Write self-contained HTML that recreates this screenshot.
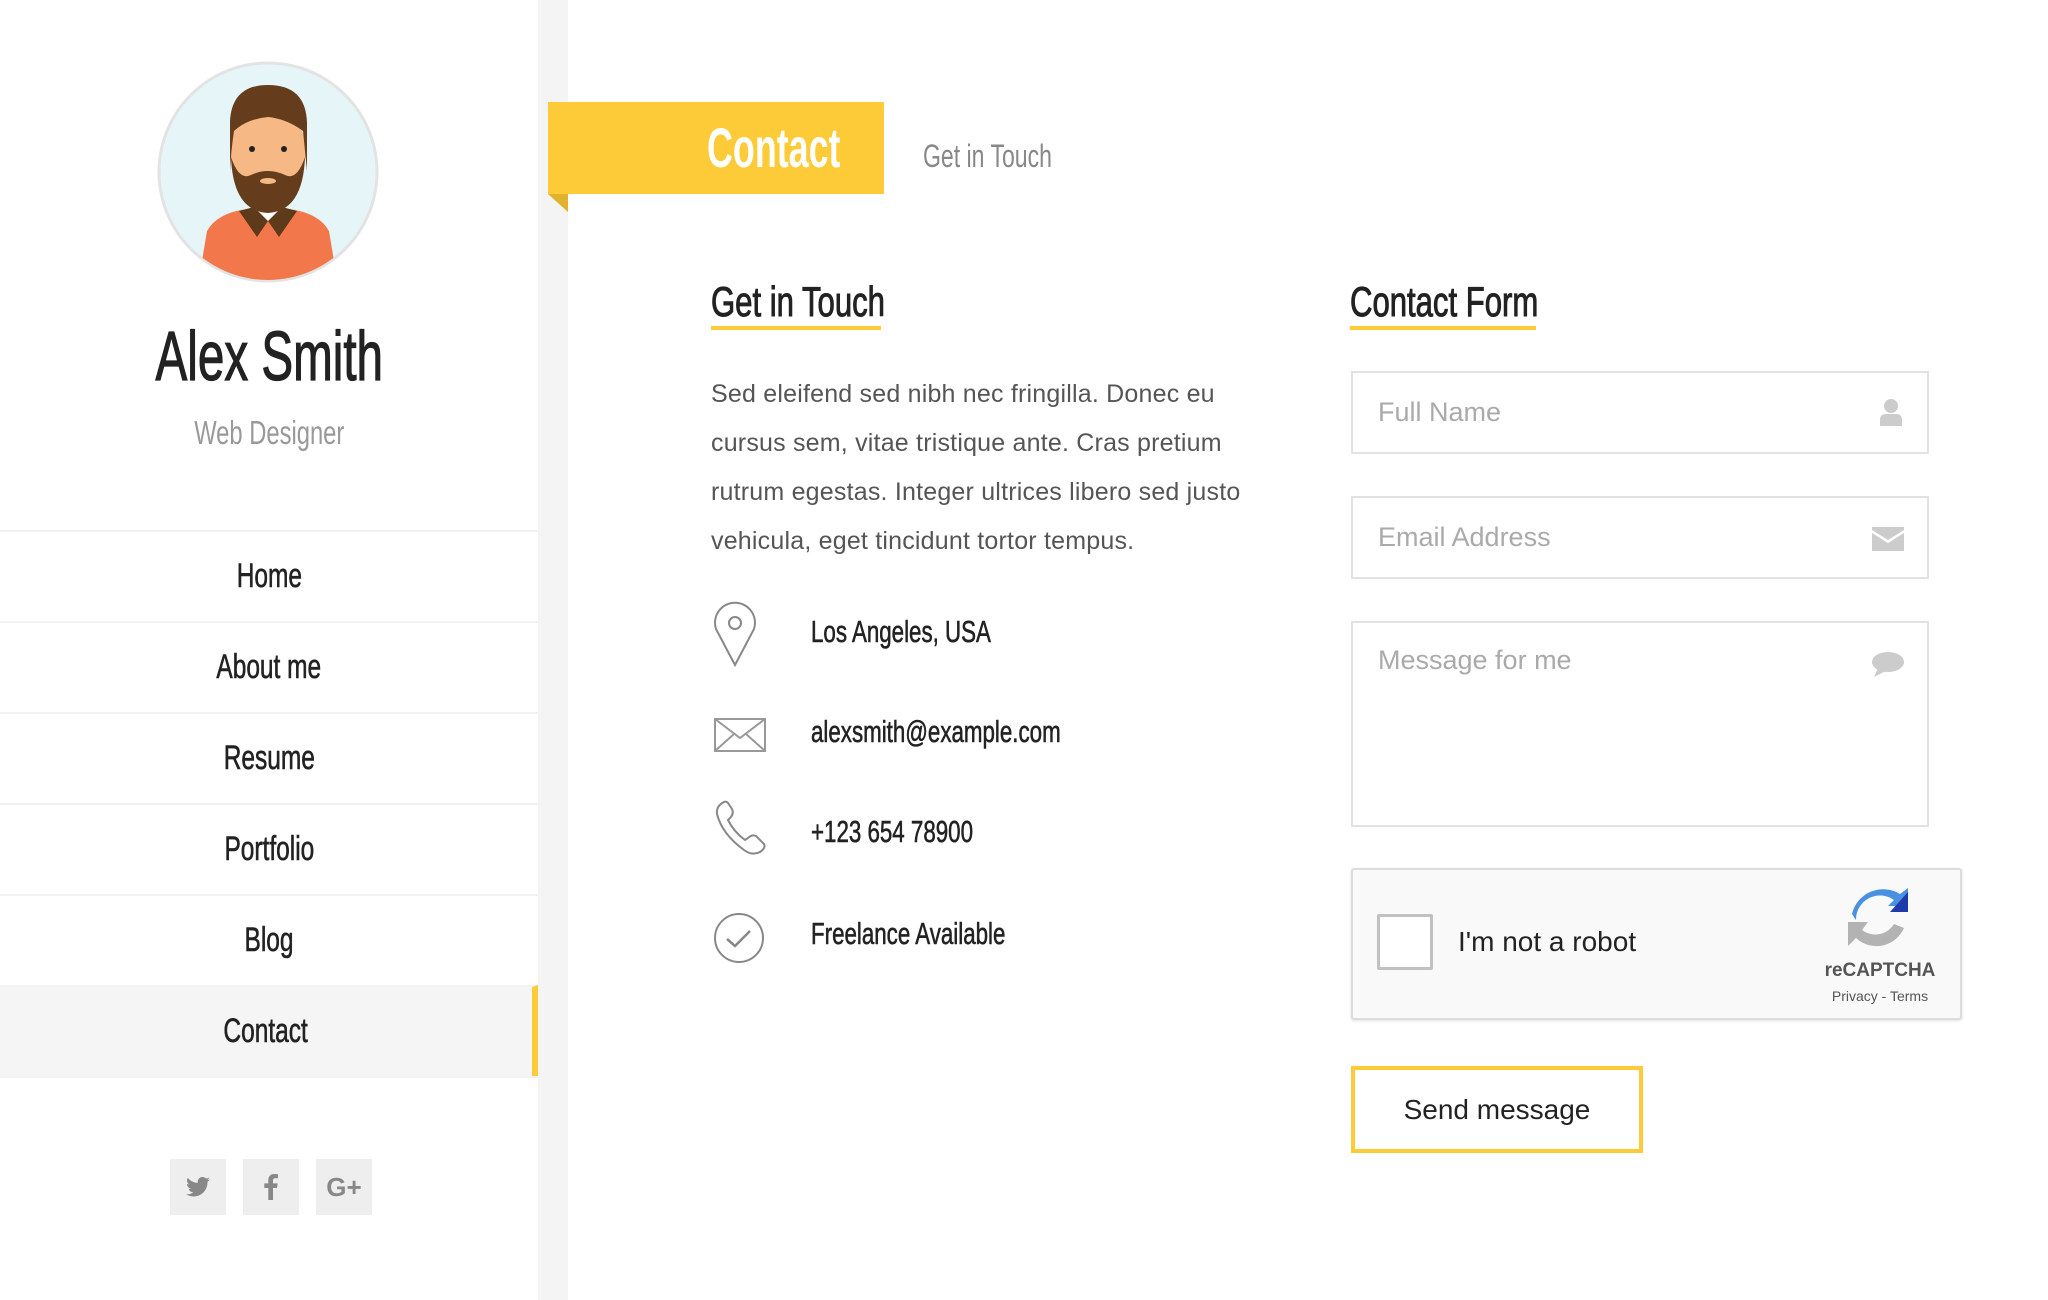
<!DOCTYPE html>
<html><head><meta charset="utf-8"><style>
*{margin:0;padding:0;box-sizing:border-box}
body{width:2048px;height:1300px;background:#fff;position:relative;overflow:hidden;font-family:"Liberation Sans",sans-serif;color:#222}
.osw{font-family:"Liberation Sans",sans-serif;-webkit-text-stroke:.6px currentColor}
.abs{position:absolute}
.c{display:inline-block;transform:scaleX(.72);transform-origin:left center;white-space:nowrap}
.cc{display:inline-block;transform:scaleX(.72);transform-origin:center center;white-space:nowrap}
.side{left:0;top:0;width:538px;height:1300px;background:#fff}
.strip{left:538px;top:0;width:30px;height:1300px;background:#f4f4f4}
.nav{left:0;width:538px;height:91px;border-top:2px solid #f2f2f2;text-align:center;line-height:89px;font-size:34px;color:#222}
.soc{width:56px;height:56px;background:#eee;top:1159px;display:flex;align-items:center;justify-content:center;color:#888;font-weight:bold;font-size:28px}
.inp{left:1351px;width:578px;border:2px solid #e2e2e2;background:#fff;color:#aaa;font-size:27px;padding-left:25px}
.ci{left:811px;font-size:31px;color:#222}
</style></head><body>
<div class="abs side"></div>
<div class="abs strip"></div>

<svg class="abs" style="left:157px;top:61px" width="222" height="222" viewBox="0 0 222 222">
<defs><clipPath id="c"><circle cx="111" cy="111" r="108"/></clipPath></defs>
<circle cx="111" cy="111" r="109" fill="#e5f5f8" stroke="#e3e3e3" stroke-width="3"/>
<g clip-path="url(#c)">
<path d="M40 230 L50 170 Q60 152 90 148 L132 148 Q162 152 172 170 L182 230Z" fill="#f2784b"/>
<path d="M82 150 L100 176 L111 160 L122 176 L140 150 L125 146 L111 160 L97 146Z" fill="#5d3a1a"/>
<path d="M97 146 L111 160 L125 146Z" fill="#fff"/>
<rect x="100" y="128" width="22" height="22" fill="#e8a26e"/>
<ellipse cx="111" cy="90" rx="38" ry="45" fill="#f6b985"/>
<path d="M73 60 Q75 24 111 24 Q149 24 150 62 L150 110 Q148 90 146 70 Q130 58 111 56 Q90 58 77 70 Q74 90 73 110Z" fill="#663d1c"/>
<path d="M74 96 Q76 150 111 152 Q146 150 148 96 Q140 120 128 114 Q111 106 94 114 Q82 120 74 96Z" fill="#663d1c"/>
<ellipse cx="111" cy="120" rx="8" ry="3" fill="#f6b985"/>
<circle cx="95" cy="88" r="3" fill="#222"/><circle cx="127" cy="88" r="3" fill="#222"/>
</g></svg>

<div class="abs osw" style="left:0;width:538px;top:316px;text-align:center;font-size:70px;color:#222;-webkit-text-stroke:1.2px #222"><span class="cc" style="transform:scaleX(.68)">Alex Smith</span></div>
<div class="abs" style="left:0;width:538px;top:414px;text-align:center;font-size:33px;color:#999"><span class="cc">Web Designer</span></div>

<div class="abs nav osw" style="top:530px"><span class="cc">Home</span></div>
<div class="abs nav osw" style="top:621px"><span class="cc">About me</span></div>
<div class="abs nav osw" style="top:712px"><span class="cc">Resume</span></div>
<div class="abs nav osw" style="top:803px"><span class="cc">Portfolio</span></div>
<div class="abs nav osw" style="top:894px"><span class="cc">Blog</span></div>
<div class="abs nav osw" style="top:985px;background:#f5f5f5;border-right:6px solid #fccb37"><span class="cc">Contact</span></div>
<div class="abs" style="left:0;top:1076px;width:538px;border-top:2px solid #f2f2f2"></div>

<div class="abs soc" style="left:170px"><svg width="24" height="20" viewBox="0 0 24 20"><path d="M24 2.4a9.8 9.8 0 0 1-2.8.8A5 5 0 0 0 23.3.4a9.9 9.9 0 0 1-3.1 1.2A4.9 4.9 0 0 0 11.8 6 14 14 0 0 1 1.7.9a4.9 4.9 0 0 0 1.5 6.6A4.9 4.9 0 0 1 1 6.9a4.9 4.9 0 0 0 3.9 4.9 5 5 0 0 1-2.2.1 4.9 4.9 0 0 0 4.6 3.4A9.9 9.9 0 0 1 0 17.3 14 14 0 0 0 7.5 19.5c9 0 14-7.5 14-14v-.6A10 10 0 0 0 24 2.4z" fill="#888"/></svg></div>
<div class="abs soc" style="left:243px"><svg width="14" height="26" viewBox="0 0 14 26"><path d="M9 26V14h4l.6-4.6H9V6.5c0-1.3.4-2.2 2.3-2.2H14V.2A33 33 0 0 0 10.3 0C6.7 0 4.3 2.2 4.3 6.2v3.2H.3V14h4v12z" fill="#888"/></svg></div>
<div class="abs soc" style="left:316px;font-size:26px">G+</div>

<!-- banner -->
<div class="abs" style="left:548px;top:102px;width:336px;height:92px;background:#fccb37"></div>
<svg class="abs" style="left:548px;top:194px" width="20" height="18"><path d="M0 0H20V18Z" fill="#e1b22b"/></svg>
<div class="abs" style="left:548px;top:102px;width:292px;height:92px;line-height:92px;text-align:right;color:#fff;font-size:56px;font-weight:bold"><span class="c" style="transform:scaleX(.64);transform-origin:right center">Contact</span></div>
<div class="abs" style="left:923px;top:138px;font-size:32px;color:#888"><span class="c">Get in Touch</span></div>

<!-- left column -->
<div class="abs osw" style="left:711px;top:280px;width:170px;font-size:42px;color:#222;border-bottom:4px solid #fccb37;padding-bottom:2px;line-height:44px;-webkit-text-stroke:1px #222"><span class="c" style="transform:scaleX(.74)">Get in Touch</span></div>
<div class="abs" style="left:711px;top:370px;width:620px;font-size:25px;line-height:49px;color:#555;white-space:nowrap;letter-spacing:.2px">Sed eleifend sed nibh nec fringilla. Donec eu<br>cursus sem, vitae tristique ante. Cras pretium<br>rutrum egestas. Integer ultrices libero sed justo<br>vehicula, eget tincidunt tortor tempus.</div>

<svg class="abs" style="left:712px;top:601px" width="46" height="66" viewBox="0 0 46 66"><path d="M23 64 L4 28 A20 20 0 1 1 42 28 Z" fill="none" stroke="#888" stroke-width="2"/><circle cx="23" cy="22" r="6" fill="none" stroke="#888" stroke-width="2"/></svg>
<div class="abs ci osw" style="top:614px"><span class="c">Los Angeles, USA</span></div>
<svg class="abs" style="left:714px;top:718px" width="52" height="34" viewBox="0 0 52 34"><rect x="1" y="1" width="50" height="32" fill="none" stroke="#999" stroke-width="2"/><path d="M1 1 L26 20 L51 1 M1 33 L20 16 M51 33 L32 16" fill="none" stroke="#999" stroke-width="2"/></svg>
<div class="abs ci osw" style="top:714px"><span class="c">alexsmith@example.com</span></div>
<svg class="abs" style="left:714px;top:800px" width="52" height="56" viewBox="0 0 52 56"><path d="M10 2 Q2 6 3 14 Q8 34 30 50 Q38 56 46 52 Q52 48 50 44 L42 36 Q38 34 34 38 L31 40 Q20 32 14 20 L17 17 Q20 13 18 9 L14 3 Q12 1 10 2Z" fill="none" stroke="#888" stroke-width="2"/></svg>
<div class="abs ci osw" style="top:814px"><span class="c">+123 654 78900</span></div>
<svg class="abs" style="left:713px;top:912px" width="52" height="52" viewBox="0 0 52 52"><circle cx="26" cy="26" r="24" fill="none" stroke="#888" stroke-width="2"/><path d="M14 27 L22 34 L37 19" fill="none" stroke="#888" stroke-width="2.5"/></svg>
<div class="abs ci osw" style="top:916px"><span class="c">Freelance Available</span></div>

<!-- right column -->
<div class="abs osw" style="left:1350px;top:280px;width:186px;font-size:42px;color:#222;border-bottom:4px solid #fccb37;padding-bottom:2px;line-height:44px;-webkit-text-stroke:1px #222"><span class="c" style="transform:scaleX(.74)">Contact Form</span></div>
<div class="abs inp" style="top:371px;height:83px;line-height:79px">Full Name</div>
<svg class="abs" style="left:1880px;top:398px" width="22" height="28" viewBox="0 0 22 28"><circle cx="11" cy="8" r="7" fill="#ccc"/><path d="M0 28 V22 Q0 16 6 16 H16 Q22 16 22 22 V28Z" fill="#ccc"/></svg>
<div class="abs inp" style="top:496px;height:83px;line-height:79px">Email Address</div>
<svg class="abs" style="left:1872px;top:527px" width="32" height="24" viewBox="0 0 32 24"><path d="M0 3 V0 H32 V3 L16 13Z" fill="#ccc"/><path d="M0 6 L16 16 L32 6 V24 H0Z" fill="#ccc"/></svg>
<div class="abs inp" style="top:621px;height:206px;padding-top:22px;line-height:30px">Message for me</div>
<svg class="abs" style="left:1872px;top:652px" width="32" height="26" viewBox="0 0 32 26"><ellipse cx="16" cy="10" rx="16" ry="10" fill="#ccc"/><path d="M6 16 L2 25 L14 19Z" fill="#ccc"/></svg>

<div class="abs" style="left:1351px;top:868px;width:611px;height:152px;background:#f9f9f9;border:2px solid #dcdcdc;box-shadow:0 1px 3px rgba(0,0,0,.12);border-radius:3px"></div>
<div class="abs" style="left:1377px;top:914px;width:56px;height:56px;background:#fff;border:3px solid #c1c1c1;border-radius:2px"></div>
<div class="abs" style="left:1458px;top:926px;font-size:28px;color:#222">I'm not a robot</div>
<svg class="abs" style="left:1848px;top:888px" width="64" height="64" viewBox="0 0 64 64"><path d="M8 32 A24 24 0 0 1 46 12 L40 18 H60 V0 L52 6 A32 32 0 0 0 4 26Z" fill="#4a90e2"/><path d="M60 4 V24 H42 Z" fill="#1c3aa9"/><path d="M8 34 H0 V58 L8 50 A30 30 0 0 0 56 40 L46 36 A22 22 0 0 1 14 42 L20 34Z" fill="#b3b3b3"/></svg>
<div class="abs" style="left:1820px;top:960px;width:120px;text-align:center;font-size:19px;color:#555;font-weight:bold">reCAPTCHA</div>
<div class="abs" style="left:1816px;top:988px;width:128px;text-align:center;font-size:14px;color:#555">Privacy - Terms</div>

<div class="abs" style="left:1351px;top:1066px;width:292px;height:87px;border:4px solid #fccb37;text-align:center;line-height:79px;font-size:28px;color:#222">Send message</div>
</body></html>
